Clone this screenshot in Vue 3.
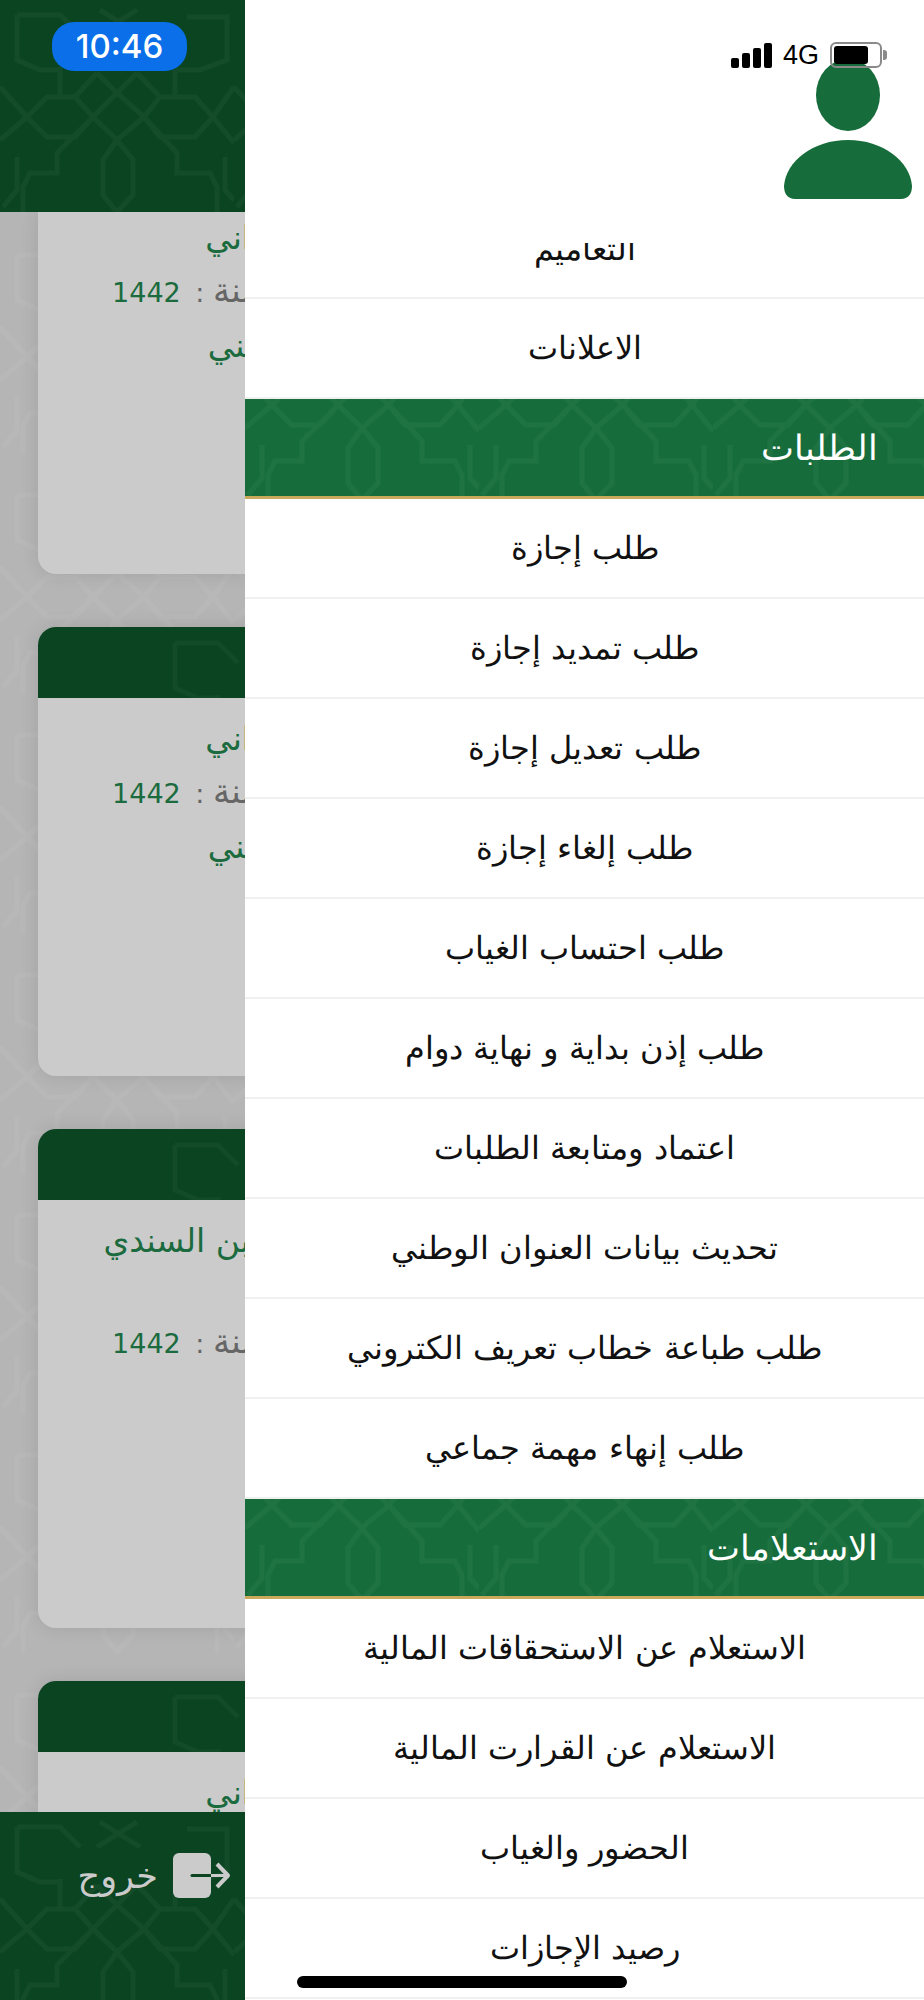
<script setup>
const requestRows = [
  'طلب إجازة',
  'طلب تمديد إجازة',
  'طلب تعديل إجازة',
  'طلب إلغاء إجازة',
  'طلب احتساب الغياب',
  'طلب إذن بداية و نهاية دوام',
  'اعتماد ومتابعة الطلبات',
  'تحديث بيانات العنوان الوطني',
  'طلب طباعة خطاب تعريف الكتروني',
  'طلب إنهاء مهمة جماعي',
]
const inquiryRows = [
  'الاستعلام عن الاستحقاقات المالية',
  'الاستعلام عن القرارت المالية',
  'الحضور والغياب',
  'رصيد الإجازات',
]
</script>

<template>
  <div class="screen">
    <aside class="back tile">
      <div class="back-top tile"><span class="clock">10:46</span></div>
      <div class="cards">
        <section class="card card-first">
          <p class="line name">اني</p>
          <p class="line year"><span>سنة</span> : <b>1442</b></p>
          <p class="line name last">ـني</p>
        </section>
        <section class="card">
          <div class="card-head tile"></div>
          <p class="line name">اني</p>
          <p class="line year"><span>سنة</span> : <b>1442</b></p>
          <p class="line name last">ـني</p>
        </section>
        <section class="card card-tall">
          <div class="card-head tile"></div>
          <p class="line name wide">بن السندي</p>
          <p class="line year"><span>سنة</span> : <b>1442</b></p>
        </section>
        <section class="card">
          <div class="card-head tile"></div>
          <p class="line name">اني</p>
        </section>
      </div>
      <div class="back-foot tile">
        <div class="logout">
          <svg width="58" height="46" viewBox="0 0 58 46">
            <rect x="0" y="0" width="38" height="45" rx="6" fill="#cbcbcb" />
            <path d="M19 22.5H38" fill="none" stroke="#0a4420" stroke-width="3" stroke-linecap="round" />
            <path d="M38 22.5H54" fill="none" stroke="#cbcbcb" stroke-width="3" />
            <path d="M44 11L55 22.5L44 34" fill="none" stroke="#cbcbcb" stroke-width="4" stroke-linejoin="round" />
          </svg>
          <span>خروج</span>
        </div>
      </div>
    </aside>
    <main class="drawer">
      <div class="status">
        <span class="bars"><i></i><i></i><i></i><i></i></span>
        <span class="net">4G</span>
        <span class="battery"><i></i></span>
      </div>
      <div class="avatar">
        <svg width="130" height="138" viewBox="0 0 130 138">
          <ellipse cx="65" cy="33" rx="32" ry="36" fill="#166d3b" />
          <path d="M1 124C3 99 30 78 65 78C100 78 127 99 129 124C129 132 125 137 118 137H12C5 137 1 132 1 124Z" fill="#166d3b" />
        </svg>
      </div>
      <div class="row row-cut"><span>التعاميم</span></div>
      <div class="row"><span>الاعلانات</span></div>
      <div class="band tile">الطلبات</div>
      <div v-for="r in requestRows" :key="r" class="row"><span>{{ r }}</span></div>
      <div class="band tile">الاستعلامات</div>
      <div v-for="r in inquiryRows" :key="r" class="row"><span>{{ r }}</span></div>
      <div class="home"></div>
    </main>
  </div>
</template>

<style>
html, body { margin: 0; background: #fff; }
</style>

<style scoped>
.screen { width: 924px; height: 2000px; display: flex; overflow: hidden; font-family: "DejaVu Sans", sans-serif; }
.tile {
  background-image: url("data:image/svg+xml,%3Csvg xmlns='http://www.w3.org/2000/svg' width='234' height='240'%3E%3Cpath fill='none' stroke='white' stroke-opacity='.04' stroke-width='5' d='M27 117L47 97H75L93 117L75 137H47ZM144 117L160 97H195L213 117L195 137H160ZM117 140L133 160V195L117 212L103 195V160ZM0 87L27 117L0 140M234 87L213 117L234 143M93 117L117 140L144 117M93 117L117 93L144 117M93 117L57 153V173H30L23 187V213M144 117L177 153V173H210L217 187V213M17 157V190L3 207M225 157V190L234 200M97 73L117 93L137 73M60 67V97M175 70V97M17 15H60L80 35M17 15V60L40 70H60M187 17H227V60L200 70H175M100 10L140 35M137 10L97 35M75 97L97 73M160 97L137 73'/%3E%3C/svg%3E");
}
.back { width: 245px; flex: none; display: flex; flex-direction: column; background-color: #b5b5b5; overflow: hidden; }
.back-top { height: 212px; flex: none; padding: 22px 0 0 52px; box-sizing: border-box; background-color: #0a4420; position: relative; z-index: 1; }
.clock { display: inline-block; width: 135px; height: 49px; border-radius: 22px; background: #0a6fe8; color: #fff; font: 500 33px/49px Inter, sans-serif; text-align: center; }
.cards { flex: 1; padding-left: 38px; overflow: hidden; display: flex; flex-direction: column; gap: 53px; }
.card { width: 600px; height: 449px; background: #cbcbcb; border-radius: 18px; flex: none; box-sizing: border-box; box-shadow: 0 0 18px rgba(0, 0, 0, .1); }
.card-first { height: 362px; border-radius: 0 0 18px 18px; padding-top: 6px; }
.card-tall { height: 499px; }
.card-head { height: 71px; background-color: #0a4420; background-repeat: no-repeat; background-position: 120px 1px; border-radius: 18px 18px 0 0; margin-bottom: 21px; }
.line { margin: 0; height: 52px; direction: rtl; padding-right: 387px; color: #1b6b3f; font-size: 33px; line-height: 40px; white-space: nowrap; }
.name.last { padding-right: 383px; }
.name.wide { height: 100px; padding-right: 388px; }
.year { color: #666; font-size: 27px; height: 56px; padding-right: 368px; }
.year span { font-size: 34px; }
.year b { color: #1b6b3f; font-weight: 400; letter-spacing: .5px; margin-right: 6px; }
.back-foot { height: 188px; flex: none; background-color: #0a4420; position: relative; z-index: 1; }
.logout { display: flex; direction: rtl; align-items: center; gap: 15px; padding: 41px 14px 0 0; color: #cbcbcb; font-size: 35px; }
.logout svg { flex: none; }
.drawer { flex: 1; position: relative; background: #fff; z-index: 2; }
.status { height: 70px; box-sizing: border-box; padding: 40px 42px 0 0; display: flex; justify-content: flex-end; align-items: center; gap: 9px; }
.bars { display: flex; align-items: flex-end; gap: 3px; height: 25px; margin-right: 2px; }
.bars i { width: 8px; background: #000; border-radius: 2px; }
.bars i:nth-child(1) { height: 10px; }
.bars i:nth-child(2) { height: 15px; }
.bars i:nth-child(3) { height: 20px; }
.bars i:nth-child(4) { height: 25px; }
.net { font: 400 27px/26px "Liberation Sans", sans-serif; margin-right: 2px; }
.battery { width: 44px; height: 18px; border: 2px solid #8a8a8a; border-radius: 6px; padding: 2px; position: relative; z-index: 2; }
.battery::after { content: ""; position: absolute; right: -7px; top: 6px; width: 4px; height: 10px; background: #8a8a8a; border-radius: 0 3px 3px 0; }
.battery i { display: block; width: 34px; height: 100%; background: #000; border-radius: 3px; }
.avatar { height: 181px; margin-top: -8px; padding-left: 538px; }
.row { height: 100px; border-bottom: 2px solid #f0f0f0; box-sizing: border-box; display: flex; align-items: center; justify-content: center; direction: rtl; color: #111; font-size: 31.5px; font-weight: 200; }
.row-cut { height: 56px; overflow: hidden; align-items: flex-start; }
.row-cut span { line-height: 36px; margin-top: -12px; }
.band { height: 100px; box-sizing: border-box; background-color: #166d3b; background-position: 0 -111px; border-bottom: 3px solid #c9a95a; color: #fff; font-size: 35px; font-weight: 200; direction: rtl; display: flex; align-items: center; padding-right: 46px; }
.home { position: absolute; left: 52px; bottom: 12px; width: 330px; height: 12px; border-radius: 6px; background: #000; }
</style>
